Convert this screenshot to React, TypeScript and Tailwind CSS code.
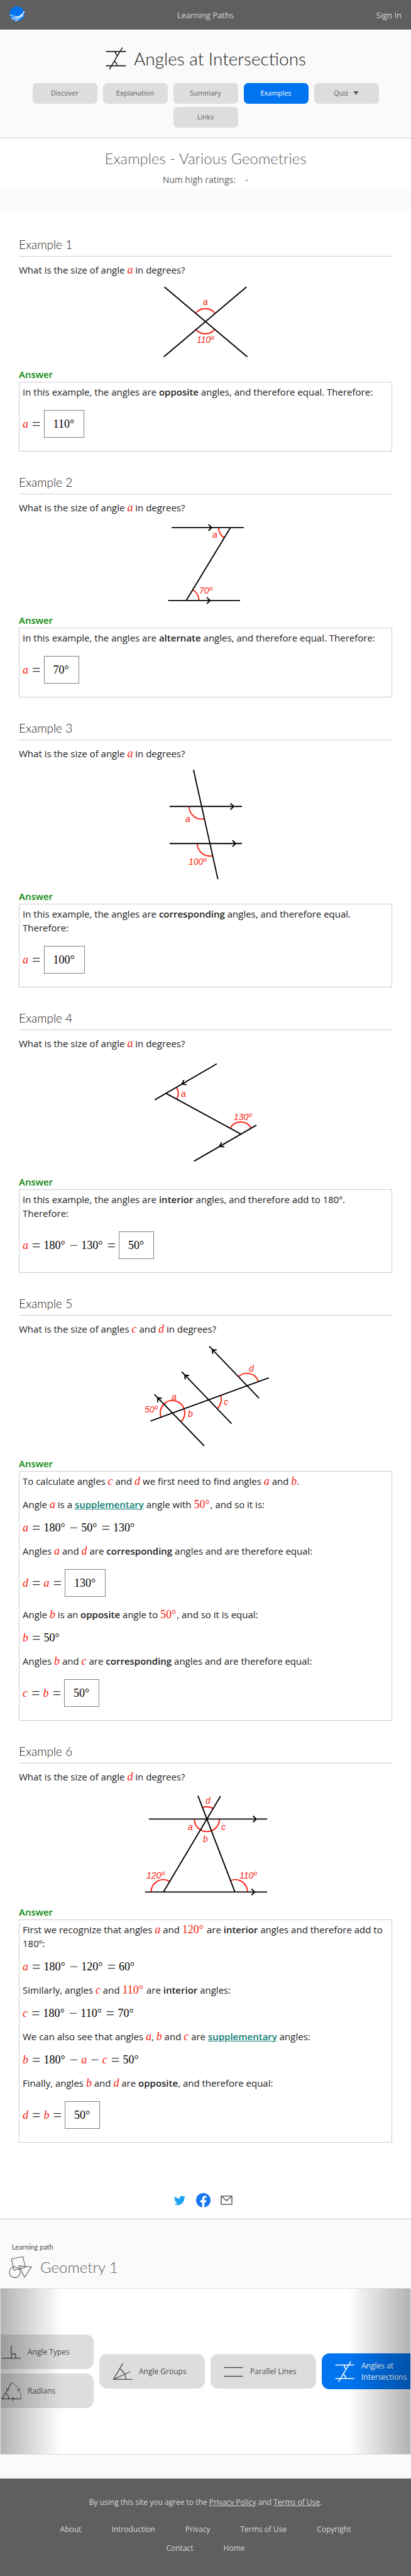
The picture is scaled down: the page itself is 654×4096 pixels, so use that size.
import type { ReactNode } from "react";

const serif = "font-['Liberation_Serif',serif]";

/* ---------- Math typesetting ---------- */

function V({ children }: { children: ReactNode }) {
  return (
    <span className={`${serif} text-[18px] leading-none text-[#fa2010] italic`}>{children}</span>
  );
}

function Num({ children, red }: { children: ReactNode; red?: boolean }) {
  return (
    <span className={`${serif} mr-px text-[18px] leading-none ${red ? "text-[#fa2010]" : "text-black"}`}>
      {children}°
    </span>
  );
}

function Op({ children }: { children: ReactNode }) {
  return <span className={`${serif} mr-[5px] ml-[6px] text-[24px] leading-none text-[#333]`}>{children}</span>;
}

function P({ children }: { children: ReactNode }) {
  return <p className="mb-[15px]">{children}</p>;
}

function Eq({ children }: { children: ReactNode }) {
  return <p className="mb-[15px] flex h-[22px] items-center">{children}</p>;
}

function BoxedEq({ children, result }: { children: ReactNode; result: string }) {
  return (
    <p className="mb-4 flex items-center pt-[3px] pb-px">
      {children}
      <span className="flex h-[44px] items-center border border-[#808080] px-[14px]">
        <Num>{result}</Num>
      </span>
    </p>
  );
}

function B({ children }: { children: ReactNode }) {
  return <strong className="font-semibold">{children}</strong>;
}

function Supplementary() {
  return (
    <a href="#supplementary" className="font-semibold text-[#0b7d72] underline">
      supplementary
    </a>
  );
}

/* ---------- Figures ---------- */

function Figure({ h, children }: { h: number; children: ReactNode }) {
  return (
    <svg
      width="280"
      height={h}
      viewBox={`0 0 280 ${h}`}
      fill="none"
      strokeWidth="1.9"
      className="mx-auto block"
      role="img"
      aria-label="Angle diagram"
    >
      {children}
    </svg>
  );
}

function Ink({ d }: { d: string }) {
  return <path d={d} stroke="#000" />;
}

function Arc({ d }: { d: string }) {
  return <path d={d} stroke="#fa2010" />;
}

function Label({ x, y, children }: { x: number; y: number; children: ReactNode }) {
  return (
    <text
      x={x}
      y={y}
      fill="#fa2010"
      className="font-['Liberation_Sans',sans-serif] text-[14px] italic"
    >
      {children}
    </text>
  );
}

function OppositeFigure() {
  return (
    <Figure h={144}>
      <Arc d="M124.4 57.9A20 20 0 0 1 155 57.9M124.4 83.7A20 20 0 0 0 155 83.7" />
      <Ink d="M74.6 16.3L206.4 127.3M205.2 16.3L73.8 127.3" />
      <Label x={136} y={45}>a</Label>
      <Label x={126} y={105}>110º</Label>
    </Figure>
  );
}

function AlternateFigure() {
  return (
    <Figure h={157}>
      <Arc d="M161 20.9A19 19 0 0 0 169.8 37.1M129.7 136.9A20.5 20.5 0 0 0 119.6 119.8" />
      <Ink d="M86 20.9H201M80.5 136.9H195M179.7 20.9L109.2 136.9M144.7 16L149.8 20.9L144.7 25.8M142.2 132L147.3 136.9L142.2 141.8" />
      <Label x={151} y={37}>a</Label>
      <Label x={130} y={126}>70º</Label>
    </Figure>
  );
}

function CorrespondingFigure() {
  return (
    <Figure h={205}>
      <Arc d="M113.8 73.3A20 20 0 0 0 138.2 92.8M127 132.2A20 20 0 0 0 151.4 151.7" />
      <Ink d="M83 73.3H198M83 132.2H198M120.9 15.3L159.7 188.9M179.7 68.4L184.8 73.3L179.7 78.2M183 127.3L188.1 132.2L183 137.1" />
      <Label x={108} y={98}>a</Label>
      <Label x={113} y={166}>100º</Label>
    </Figure>
  );
}

function InteriorFigure() {
  return (
    <Figure h={198}>
      <Arc d="M94 59A19 19 0 0 1 94.2 77.7M179.3 124A19 19 0 0 1 212.5 123.6" />
      <Ink d="M158 21.5L59.2 78.9M77.5 68.6L196 133.1M221 119.1L121.8 176.4M105.5 47.4L102.4 53.7L109.7 54.6M165.6 146.3L162.4 152.7L169.9 153.6" />
      <Label x={101} y={74}>a</Label>
      <Label x={185} y={111}>130º</Label>
    </Figure>
  );
}

function ThreeParallelsFigure() {
  return (
    <Figure h={192}>
      <Arc d="M69.2 129.2A19.5 19.5 0 0 1 73.9 108.5A19.5 19.5 0 0 1 105.8 115.8A19.5 19.5 0 0 1 101.1 136.5M164 94.8A20 20 0 0 1 158.9 115.7M192.4 65.2A19.5 19.5 0 0 1 224.3 72.5" />
      <Ink d="M52.5 135.6L240.6 66.8M58.8 93.2L138 175.2M102.1 57.1L181.4 139.7M145.9 16.6L225.2 99.2M70.6 99.5L63.8 98.7L64.2 105.7M114 63.2L107.2 62.6L107.6 69.4M157.8 22.7L151 22.1L151.4 28.9" />
      <Label x={86} y={102}>a</Label>
      <Label x={43} y={122}>50º</Label>
      <Label x={112} y={129}>b</Label>
      <Label x={169} y={110}>c</Label>
      <Label x={209} y={57}>d</Label>
    </Figure>
  );
}

function TriangleFigure() {
  return (
    <Figure h={193}>
      <Arc d="M135.2 38.2A19.5 19.5 0 0 1 152.2 39.6M122.2 56.4A20 20 0 0 0 162.2 56.4M53.5 172.4A19.5 19.5 0 0 1 83 155.6M179.8 154.2A19.7 19.7 0 0 1 206.8 172.4" />
      <Ink d="M50 56.4H238M44 172.4H238M163.9 20L73 172.4M128 19.3L186.8 172.4M215.6 51.5L220.7 56.4L215.6 61.3M213.2 167.5L218.3 172.4L213.2 177.3" />
      <Label x={140} y={32}>d</Label>
      <Label x={112} y={74}>a</Label>
      <Label x={165} y={74}>c</Label>
      <Label x={136} y={93}>b</Label>
      <Label x={46} y={151}>120º</Label>
      <Label x={194} y={151}>110º</Label>
    </Figure>
  );
}

/* ---------- Icons ---------- */

function Logo() {
  return (
    <svg width="24" height="24" viewBox="0 0 24 24" aria-hidden="true">
      <circle cx="12" cy="12" r="11.8" fill="#0074f0" />
      <g fill="none" stroke="#e8f3ff" strokeWidth="1.1">
        <path d="M.4 13.6C7 17 15 17.3 23.4 15" />
        <path d="M2 18.3C9 19.5 17 17 23.6 9" />
        <path d="M4.5 20.8C11 20.8 16 17.5 20.5 12" />
        <path d="M9 23.4C16 20.5 20.5 15 23.4 7.8" strokeWidth="1.4" />
      </g>
    </svg>
  );
}

function IntersectionIcon({ size }: { size: number }) {
  return (
    <svg width={size} height={size} viewBox="0 0 34 34" fill="none" stroke="currentColor" strokeWidth="1.5" className="shrink-0" aria-hidden="true">
      <path d="M1.5 6.5H31.5M1.5 28H31.5M26.3.6L6.7 33.2" />
      <path d="M15.6 6.5A8 8 0 0 0 18.8 12.8M18.2 28A8 8 0 0 0 14 21.2" />
    </svg>
  );
}

function AngleTypesIcon() {
  return (
    <svg width="34" height="34" viewBox="0 0 34 34" fill="none" stroke="currentColor" strokeWidth="1.3" className="shrink-0" aria-hidden="true">
      <path d="M17 6.7V26.6M2 26.6H32M17 20H24V26.6" />
    </svg>
  );
}

function RadiansIcon() {
  return (
    <svg width="34" height="34" viewBox="0 0 34 34" fill="none" stroke="currentColor" strokeWidth="1.2" className="shrink-0" aria-hidden="true">
      <path d="M17.8 3.3L2.2 29.4H32.7M8.7 13L13.7 15.9M19.6 26.3V32.5M26.2 15.9L31.1 13M8.6 20.6A10.5 10.5 0 0 1 12.9 29.4" />
      <path d="M18.7 3.9A30 30 0 0 1 32.7 28.5" strokeWidth=".7" />
    </svg>
  );
}

function AngleGroupsIcon() {
  return (
    <svg width="34" height="34" viewBox="0 0 34 34" fill="none" stroke="currentColor" strokeWidth="1.3" className="shrink-0" aria-hidden="true">
      <path d="M17.7 3.6L2.5 29.4H32.7M2.5 29.4L29.6 17M12.6 12.6A20 20 0 0 1 22.3 29.4" />
    </svg>
  );
}

function ParallelIcon() {
  return (
    <svg width="34" height="34" viewBox="0 0 34 34" fill="none" stroke="currentColor" strokeWidth="1.3" className="shrink-0" aria-hidden="true">
      <path d="M1.5 10.5H31.5M1.5 24.5H31.5" />
    </svg>
  );
}

function ShapesIcon() {
  return (
    <svg width="37" height="36" viewBox="44 112 120 116" fill="none" stroke="#5f5f5f" strokeWidth="3.6" aria-hidden="true">
      <path d="M58 128L117 115L129 171L70 185ZM97 163L161 168L125 222Z" />
      <circle cx="75" cy="196" r="28" />
    </svg>
  );
}

function TwitterIcon() {
  return (
    <svg width="18" height="18" viewBox="0 0 24 24" fill="#1da1f2" aria-hidden="true">
      <path d="M23.95 4.57a10 10 0 0 1-2.82.77 4.96 4.96 0 0 0 2.16-2.72c-.95.55-2 .95-3.13 1.18a4.92 4.92 0 0 0-8.38 4.48C7.69 8.1 4.07 6.13 1.64 3.16a4.82 4.82 0 0 0-.67 2.48c0 1.71.87 3.21 2.19 4.1a4.9 4.9 0 0 1-2.23-.62v.06a4.92 4.92 0 0 0 3.95 4.83 5 5 0 0 1-2.21.08 4.94 4.94 0 0 0 4.6 3.42A9.87 9.87 0 0 1 0 19.54a14 14 0 0 0 7.55 2.21c9.05 0 14-7.5 14-13.98 0-.21 0-.42-.02-.63a9.94 9.94 0 0 0 2.42-2.57z" />
    </svg>
  );
}

function FacebookIcon() {
  return (
    <svg width="23" height="23" viewBox="0 0 24 24" fill="#1877f2" aria-hidden="true">
      <path d="M24 12.07C24 5.45 18.63.07 12 .07S0 5.45 0 12.07c0 5.99 4.39 10.96 10.13 11.86v-8.39H7.08v-3.47h3.05V9.43c0-3.01 1.79-4.67 4.53-4.67 1.31 0 2.69.24 2.69.24v2.95h-1.52c-1.49 0-1.95.93-1.95 1.87v2.25h3.32l-.53 3.47h-2.79v8.39C19.61 23.03 24 18.06 24 12.07z" />
    </svg>
  );
}

function MailIcon() {
  return (
    <svg width="19" height="15" viewBox="0 0 19 15" fill="none" stroke="#5f5f5f" strokeWidth="1.6" aria-hidden="true">
      <path d="M1 1H18V14H1ZM1.5 1.5L9.5 8.2L17.5 1.5" />
    </svg>
  );
}

/* ---------- Page parts ---------- */

function Tab({ children, active }: { children: ReactNode; active?: boolean }) {
  return (
    <button
      type="button"
      className={`flex h-[33px] w-[103px] items-center justify-center gap-2 rounded-[7px] pb-px text-[11px] ${
        active ? "bg-[#0074f0] text-white" : "bg-[#ddd] text-[#5f5f5f]"
      }`}
    >
      {children}
    </button>
  );
}

function Example({
  n,
  question,
  figure,
  children,
}: {
  n: number;
  question: ReactNode;
  figure: ReactNode;
  children: ReactNode;
}) {
  return (
    <section className="mb-[34px]">
      <h3 className="flex h-[34px] items-center border-b border-[#ccc] pb-[3px] font-['Lato',sans-serif] text-[19px] font-light">
        Example {n}
      </h3>
      <p className="mt-[10px]">{question}</p>
      {figure}
      <h4 className="mb-px font-semibold text-[#0a870a]">Answer</h4>
      <div className="border border-[#ccc] px-[5px] py-1">{children}</div>
    </section>
  );
}

function Card({
  icon,
  children,
  active,
}: {
  icon: ReactNode;
  children: ReactNode;
  active?: boolean;
}) {
  return (
    <a
      href="#lesson"
      className={`flex w-[168px] shrink-0 items-center gap-[9px] rounded-[12px] pl-5 text-[12px] leading-[18px] ${
        active ? "h-[57px] bg-[#0074f0] text-white" : "h-[55px] bg-[#ddd] text-[#4d4d4d]"
      }`}
    >
      {icon}
      <span>{children}</span>
    </a>
  );
}

const footerLinks = ["About", "Introduction", "Privacy", "Terms of Use", "Copyright", "Contact", "Home"];

export default function App() {
  return (
    <div className="bg-white font-['Open_Sans',sans-serif] text-[15px] leading-[22px] text-[#222]">
      <header className="grid h-[47px] grid-cols-3 items-center bg-[#5f5f5f] px-[15px] text-[13px] text-[#d8d8d8]">
        <a href="#home" aria-label="Home" className="pb-[3px]">
          <Logo />
        </a>
        <a href="#paths" className="text-center">Learning Paths</a>
        <a href="#signin" className="text-right">Sign In</a>
      </header>

      <div className="border-b border-[#ccc] bg-[#fafafa] pt-7 pb-4">
        <h1 className="flex items-center justify-center gap-[10px] font-['Lato',sans-serif] text-[28px] leading-[36px] font-light">
          <IntersectionIcon size={36} />
          Angles at Intersections
        </h1>
        <nav className="mx-auto mt-[21px] flex max-w-[560px] flex-wrap justify-center gap-x-[9px] gap-y-[5px]">
          <Tab>Discover</Tab>
          <Tab>Explanation</Tab>
          <Tab>Summary</Tab>
          <Tab active>Examples</Tab>
          <Tab>
            Quiz
            <svg width="9" height="6" viewBox="0 0 9 6" fill="#5f5f5f" aria-hidden="true">
              <path d="M0 0H9L4.5 6Z" />
            </svg>
          </Tab>
          <Tab>Links</Tab>
        </nav>
      </div>

      <div className="pt-[14px] pb-1 text-center text-[#5f5f5f]">
        <h2 className="font-['Lato',sans-serif] text-[24px] leading-[36px] font-light">
          Examples - Various Geometries
        </h2>
        <p className="mt-[5px] text-[14px]">
          Num high ratings:<span className="ml-4">-</span>
        </p>
      </div>
      <div className="h-[34px] bg-[#fafafa]" />

      <main className="px-[30px] pt-[39px]">
        <Example n={1} question={<>What is the size of angle <V>a</V> in degrees?</>} figure={<OppositeFigure />}>
          <P>In this example, the angles are <B>opposite</B> angles, and therefore equal. Therefore:</P>
          <BoxedEq result="110"><V>a</V><Op>=</Op></BoxedEq>
        </Example>

        <Example n={2} question={<>What is the size of angle <V>a</V> in degrees?</>} figure={<AlternateFigure />}>
          <P>In this example, the angles are <B>alternate</B> angles, and therefore equal. Therefore:</P>
          <BoxedEq result="70"><V>a</V><Op>=</Op></BoxedEq>
        </Example>

        <Example n={3} question={<>What is the size of angle <V>a</V> in degrees?</>} figure={<CorrespondingFigure />}>
          <P>In this example, the angles are <B>corresponding</B> angles, and therefore equal. Therefore:</P>
          <BoxedEq result="100"><V>a</V><Op>=</Op></BoxedEq>
        </Example>

        <Example n={4} question={<>What is the size of angle <V>a</V> in degrees?</>} figure={<InteriorFigure />}>
          <P>In this example, the angles are <B>interior</B> angles, and therefore add to 180º. Therefore:</P>
          <BoxedEq result="50">
            <V>a</V><Op>=</Op><Num>180</Num><Op>−</Op><Num>130</Num><Op>=</Op>
          </BoxedEq>
        </Example>

        <Example n={5} question={<>What is the size of angles <V>c</V> and <V>d</V> in degrees?</>} figure={<ThreeParallelsFigure />}>
          <P>To calculate angles <V>c</V> and <V>d</V> we first need to find angles <V>a</V> and <V>b</V>.</P>
          <P>Angle <V>a</V> is a <Supplementary /> angle with <Num red>50</Num>, and so it is:</P>
          <Eq><V>a</V><Op>=</Op><Num>180</Num><Op>−</Op><Num>50</Num><Op>=</Op><Num>130</Num></Eq>
          <P>Angles <V>a</V> and <V>d</V> are <B>corresponding</B> angles and are therefore equal:</P>
          <BoxedEq result="130"><V>d</V><Op>=</Op><V>a</V><Op>=</Op></BoxedEq>
          <P>Angle <V>b</V> is an <B>opposite</B> angle to <Num red>50</Num>, and so it is equal:</P>
          <Eq><V>b</V><Op>=</Op><Num>50</Num></Eq>
          <P>Angles <V>b</V> and <V>c</V> are <B>corresponding</B> angles and are therefore equal:</P>
          <BoxedEq result="50"><V>c</V><Op>=</Op><V>b</V><Op>=</Op></BoxedEq>
        </Example>

        <Example n={6} question={<>What is the size of angle <V>d</V> in degrees?</>} figure={<TriangleFigure />}>
          <P>First we recognize that angles <V>a</V> and <Num red>120</Num> are <B>interior</B> angles and therefore add to 180º:</P>
          <Eq><V>a</V><Op>=</Op><Num>180</Num><Op>−</Op><Num>120</Num><Op>=</Op><Num>60</Num></Eq>
          <P>Similarly, angles <V>c</V> and <Num red>110</Num> are <B>interior</B> angles:</P>
          <Eq><V>c</V><Op>=</Op><Num>180</Num><Op>−</Op><Num>110</Num><Op>=</Op><Num>70</Num></Eq>
          <P>We can also see that angles <V>a</V>, <V>b</V> and <V>c</V> are <Supplementary /> angles:</P>
          <Eq><V>b</V><Op>=</Op><Num>180</Num><Op>−</Op><V>a</V><Op>−</Op><V>c</V><Op>=</Op><Num>50</Num></Eq>
          <P>Finally, angles <V>b</V> and <V>d</V> are <B>opposite</B>, and therefore equal:</P>
          <BoxedEq result="50"><V>d</V><Op>=</Op><V>b</V><Op>=</Op></BoxedEq>
        </Example>

        <div className="flex items-center justify-center pt-[46px] pr-2 pb-[18px]">
          <a href="#twitter" aria-label="Share on Twitter" className="flex w-[37px] justify-center"><TwitterIcon /></a>
          <a href="#facebook" aria-label="Share on Facebook" className="flex w-[37px] justify-center"><FacebookIcon /></a>
          <a href="#mail" aria-label="Share by mail" className="flex w-[37px] justify-center"><MailIcon /></a>
        </div>
      </main>

      <section className="border-t border-[#ccc] bg-[#fafafa] pt-[36px] pb-[38px]">
        <div className="px-[14px] font-['Lato',sans-serif] text-[#5f5f5f]">
          <p className="pl-[5px] text-[11px] leading-[16px] text-[#4d4d4d]">Learning path</p>
          <h2 className="mt-[6px] flex h-[36px] items-center gap-[13px] text-[24px] font-light">
            <ShapesIcon />
            Geometry 1
          </h2>
        </div>
        <div className="relative mt-[15px] flex h-[265px] items-center gap-[9px] overflow-hidden border border-[#ddd] bg-white">
          <div className="-ml-5 flex flex-col gap-[7px]">
            <Card icon={<AngleTypesIcon />}>Angle Types</Card>
            <Card icon={<RadiansIcon />}>Radians</Card>
          </div>
          <Card icon={<AngleGroupsIcon />}>Angle Groups</Card>
          <Card icon={<ParallelIcon />}>Parallel Lines</Card>
          <Card icon={<IntersectionIcon size={34} />} active>
            Angles at Intersections
          </Card>
          <div className="pointer-events-none absolute inset-y-0 left-0 w-[98px] bg-linear-to-r from-black/30 to-transparent" />
          <div className="pointer-events-none absolute inset-y-0 right-0 w-[98px] bg-linear-to-l from-black/30 to-transparent" />
        </div>
      </section>

      <footer className="bg-[#5f5f5f] pt-[27px] pb-[30px] text-center text-[12px] text-[#d8d8d8]">
        <p>
          By using this site you agree to the <a href="#privacy" className="underline">Privacy Policy</a> and{" "}
          <a href="#terms" className="underline">Terms of Use</a>.
        </p>
        <nav className="mx-auto mt-[17px] flex max-w-[560px] flex-wrap justify-center">
          {footerLinks.map((label) => (
            <a key={label} href="#footer" className="px-6 py-[4px]">
              {label}
            </a>
          ))}
        </nav>
      </footer>
    </div>
  );
}
